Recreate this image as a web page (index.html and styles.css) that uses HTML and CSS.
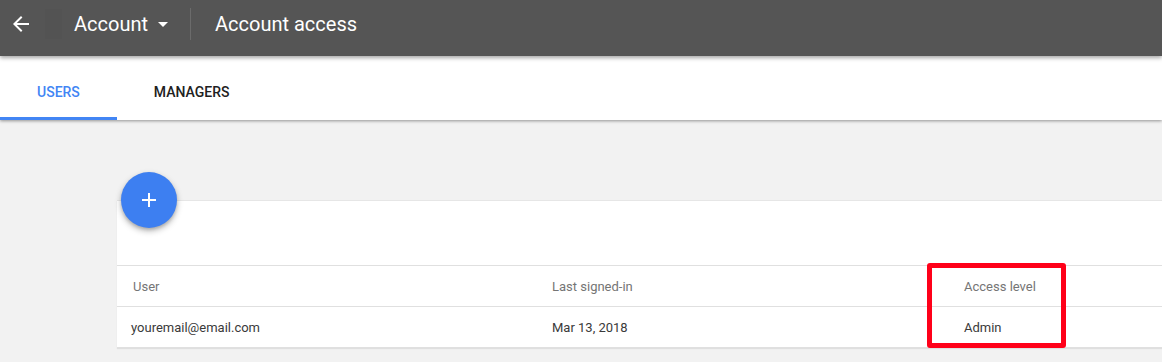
FILE: index.html
```html
<!DOCTYPE html>
<html>
<head>
<meta charset="utf-8">
<link rel="stylesheet" href="styles.css">
</head>
<body>
<header class="topbar">
  <button class="back" aria-label="Back">
    <svg viewBox="0 0 24 24" width="24" height="24"><path fill="#fff" d="M20 11H7.83l5.59-5.59L12 4l-8 8 8 8 1.41-1.41L7.83 13H20v-2z"/></svg>
  </button>
  <span class="ghost"></span>
  <div class="picker">
    <span class="picker-label">Account</span>
    <span class="caret"></span>
  </div>
  <span class="divider"></span>
  <h1 class="title">Account access</h1>
</header>
<nav class="tabs">
  <div class="tab active">USERS</div>
  <div class="tab">MANAGERS</div>
</nav>
<main class="content">
  <section class="card">
    <button class="fab" aria-label="Add">
      <svg viewBox="0 0 14 14" width="14" height="14"><path d="M6 0h2v14H6zM0 6h14v2H0z" fill="#fff"/></svg>
    </button>
    <div class="card-top"></div>
    <div class="row head">
      <div>User</div>
      <div>Last signed-in</div>
      <div>Access level</div>
    </div>
    <div class="row data">
      <div>youremail@email.com</div>
      <div>Mar 13, 2018</div>
      <div>Admin</div>
    </div>
  </section>
</main>
<div class="highlight"></div>
</body>
</html>
```
FILE: styles.css
```css
* { box-sizing: border-box; }
html, body { margin: 0; padding: 0; }
body {
  background: #f2f2f2;
  font-family: Roboto, "Liberation Sans", Arial, sans-serif;
  width: 1162px;
  height: 362px;
  overflow: hidden;
  position: relative;
}
.topbar {
  position: relative;
  z-index: 3;
  height: 56px;
  padding-bottom: 8px;
  background: #555555;
  display: flex;
  align-items: center;
  box-shadow: 0 2px 4px rgba(0,0,0,0.35);
}
.back {
  width: 24px; height: 24px;
  margin-left: 9px;
  padding: 0; border: 0; background: none;
  display: flex;
}
.ghost {
  width: 17px; height: 30px;
  margin-left: 12px;
  background: #535353;
}
.picker {
  display: flex;
  align-items: center;
  margin-left: 12px;
}
.picker-label {
  color: #fff;
  font-size: 20px;
}
.caret {
  width: 0; height: 0;
  margin-left: 10px;
  border-left: 5px solid transparent;
  border-right: 5px solid transparent;
  border-top: 5px solid #fff;
}
.divider {
  width: 1px; height: 32px;
  margin-left: 22px;
  background: #6b6b6b;
}
.title {
  margin: 0 0 0 24px;
  color: #fff;
  font-size: 20px;
  font-weight: 400;
}
.tabs {
  position: relative;
  z-index: 2;
  height: 64px;
  background: #fff;
  display: flex;
  box-shadow: 0 1px 3px rgba(0,0,0,0.4);
}
.tab {
  position: relative;
  display: flex;
  align-items: center;
  padding: 7px 37px 0;
  font-size: 14px;
  font-weight: 500;
  color: #212121;
}
.tab.active { color: #4285f4; }
.tab.active::after {
  content: "";
  position: absolute;
  left: 0; right: 0; bottom: 0;
  height: 3px;
  background: #4285f4;
}
.content {
  padding: 80px 0 0 117px;
}
.card {
  position: relative;
  background: #fff;
  box-shadow: 0 1px 1px rgba(0,0,0,0.08);
}
.fab {
  position: absolute;
  left: 4px; top: -28px;
  width: 56px; height: 56px;
  border-radius: 50%;
  border: 0; padding: 0;
  background: #3d7ff1;
  display: flex; align-items: center; justify-content: center;
  box-shadow: 0 3px 6px rgba(0,0,0,0.28), 0 2px 3px rgba(0,0,0,0.12);
}
.card-top {
  height: 66px;
  border-top: 1px solid #e6e6e6;
  border-bottom: 1px solid #e0e0e0;
}
.row {
  display: grid;
  grid-template-columns: 421px 412px 1fr;
  align-items: center;
  height: 41px;
  padding-left: 14px;
  border-bottom: 1px solid #e0e0e0;
  font-size: 13px;
}
.row.head { color: #757575; }
.row.head > div:first-child { padding-left: 2px; }
.row.data { color: #3a3a3a; }
.highlight {
  position: absolute;
  left: 927px; top: 263px;
  width: 139px; height: 85px;
  border: 5px solid #ff0019;
  border-radius: 3px;
  z-index: 5;
}
```
